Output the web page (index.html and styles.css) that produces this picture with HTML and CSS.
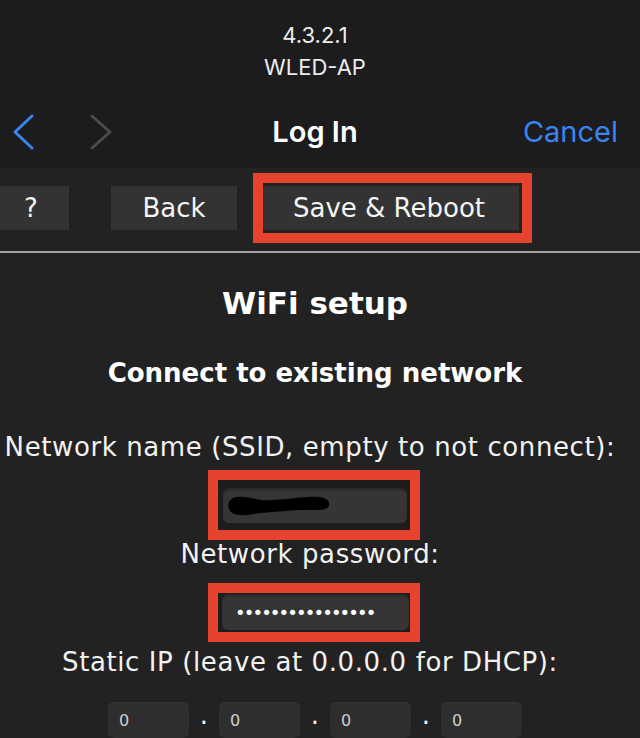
FILE: index.html
```html
<!DOCTYPE html>
<html lang="en">
<head>
<meta charset="utf-8">
<title>WLED WiFi setup</title>
<link rel="stylesheet" href="styles.css">
</head>
<body>
<header class="ios-header">
  <div class="addr addr-ip">4.3.2.1</div>
  <div class="addr">WLED-AP</div>
  <div class="nav">
    <div class="nav-left">
      <svg class="chev" width="24" height="36" viewBox="0 0 24 36"><polyline points="20,2 3,18 20,34" fill="none" stroke="#3a84f0" stroke-width="3" stroke-linecap="round" stroke-linejoin="round"/></svg>
      <svg class="chev chev-fwd" width="24" height="36" viewBox="0 0 24 36"><polyline points="4,2 22,18 4,34" fill="none" stroke="#4b4b4d" stroke-width="3" stroke-linecap="round" stroke-linejoin="round"/></svg>
    </div>
    <div class="nav-title">Log In</div>
    <div class="nav-right">Cancel</div>
  </div>
</header>

<div class="toolbar">
  <button class="btn btn-help">?</button>
  <button class="btn btn-back">Back</button>
  <span class="mark mark-save"><button class="btn btn-save">Save &amp; Reboot</button></span>
</div>
<div class="rule"></div>

<main class="settings">
  <h2 class="title">WiFi setup</h2>
  <h3 class="subtitle">Connect to existing network</h3>
  <div class="label label-first">Network name (SSID, empty to not connect):</div>
  <span class="mark mark-ssid">
    <span class="field field-ssid">
      <svg class="scribble" width="104" height="20" viewBox="0 0 104 20"><path d="M6,2 C14,-1 24,2 34,4 C48,5 64,2 82,1 C94,0 103,2 102,9 C101,15 92,14 78,14 C62,14 48,16 34,17 C22,19 10,21 4,16 C0,12 0,5 6,2 Z" fill="#000"/></svg>
    </span>
  </span>
  <div class="label label-pw">Network password:</div>
  <span class="mark mark-pw">
    <span class="field field-pw">••••••••••••••••</span>
  </span>
  <div class="label label-ip">Static IP (leave at 0.0.0.0 for DHCP):</div>
  <div class="ip-row">
    <input class="ip" type="text" value="0">
    <span class="ip-dot">.</span>
    <input class="ip" type="text" value="0">
    <span class="ip-dot">.</span>
    <input class="ip" type="text" value="0">
    <span class="ip-dot">.</span>
    <input class="ip" type="text" value="0">
  </div>
</main>
</body>
</html>
```
FILE: styles.css
```css
html, body {
  margin: 0;
  padding: 0;
  background: #222222;
  overflow: hidden;
}

body {
  width: 640px;
  height: 738px;
  font-family: "DejaVu Sans", Verdana, sans-serif;
  color: #f2f2f2;
}

/* iOS sheet header */
.ios-header {
  background: #1c1c1e;
  height: 168px;
  box-sizing: border-box;
  padding-top: 19px;
  font-family: Inter, "Noto Sans", sans-serif;
  color: #ececec;
}

.addr {
  font-size: 22px;
  line-height: 32px;
  text-align: center;
  padding-right: 10px;
}

.nav {
  display: grid;
  grid-template-columns: 1fr auto 1fr;
  align-items: center;
  height: 36px;
  margin-top: 31px;
  padding: 0 22px 0 12px;
}

.nav-left {
  display: flex;
  align-items: center;
}

.chev {
  display: block;
}

.chev-fwd {
  margin-left: 52px;
}

.nav-title {
  font-size: 29px;
  font-weight: 600;
  line-height: 36px;
  color: #ffffff;
}

.nav-right {
  justify-self: end;
  font-size: 29px;
  line-height: 36px;
  color: #3a84f0;
}

/* WLED toolbar */
.toolbar {
  display: flex;
  align-items: center;
  padding-top: 5px;
}

.btn {
  height: 44px;
  padding: 0;
  border: 0;
  border-radius: 0;
  background: #333333;
  color: #f4f4f4;
  font-family: "DejaVu Sans", Verdana, sans-serif;
  font-size: 26px;
  text-align: center;
}

.btn-help {
  width: 76px;
  margin-left: -7px;
}

.btn-back {
  width: 126px;
  margin-left: 42px;
}

.btn-save {
  width: 256px;
  padding-right: 4px;
}

.mark {
  display: flex;
  border: 10px solid #e5432d;
  background: #1d1d1d;
}

.mark-save {
  margin-left: 16px;
  padding: 3px 3px 3px 0;
  background: #222222;
}

.rule {
  margin-top: 8px;
  border-top: 2px solid #a3a3a3;
}

/* settings content */
.settings {
  display: flex;
  flex-direction: column;
  align-items: center;
  padding-right: 10px;
  text-align: center;
}

.title {
  margin: 32px 0 0;
  font-size: 31px;
  font-weight: bold;
  line-height: 36px;
  color: #ffffff;
}

.subtitle {
  margin: 37px 0 0;
  font-size: 26px;
  font-weight: bold;
  line-height: 30px;
  color: #ffffff;
}

.label {
  margin: 0 10px 0 0;
  font-size: 26px;
  line-height: 28px;
  letter-spacing: 0.6px;
  white-space: nowrap;
}

.label-first {
  margin-top: 45px;
}

.label-pw {
  margin-top: 0;
}

.label-ip {
  margin-top: 6px;
}

.mark-ssid {
  margin-top: 9px;
  margin-right: 2px;
  padding: 8px 3px 7px 5px;
}

.mark-pw {
  margin-top: 15px;
  margin-right: 2px;
  padding: 1px 1px 2px 4px;
}

.field {
  display: flex;
  align-items: center;
  box-sizing: border-box;
  background: #353535;
  border-radius: 6px;
  box-shadow: inset 0 2px 2px rgba(0, 0, 0, 0.25);
}

.field-ssid {
  width: 184px;
  height: 35px;
  padding-left: 4px;
}

.field-pw {
  width: 187px;
  height: 36px;
  padding-left: 13px;
  font-size: 18px;
  color: #ffffff;
  letter-spacing: -1.9px;
}

.scribble {
  display: block;
}

.ip-row {
  display: flex;
  align-items: flex-start;
  margin-top: 26px;
}

.ip {
  width: 81px;
  height: 36px;
  box-sizing: border-box;
  margin: 0;
  padding: 0 0 0 11px;
  border: 0;
  border-radius: 6px;
  background: #2e2e2e;
  box-shadow: inset 0 1px 0 rgba(255, 255, 255, 0.04);
  color: #cfcfcf;
  font-family: "DejaVu Sans", Verdana, sans-serif;
  font-size: 16px;
  outline: none;
}

.ip-dot {
  width: 30px;
  font-size: 26px;
  line-height: 26px;
  text-align: center;
  color: #f2f2f2;
}
```
